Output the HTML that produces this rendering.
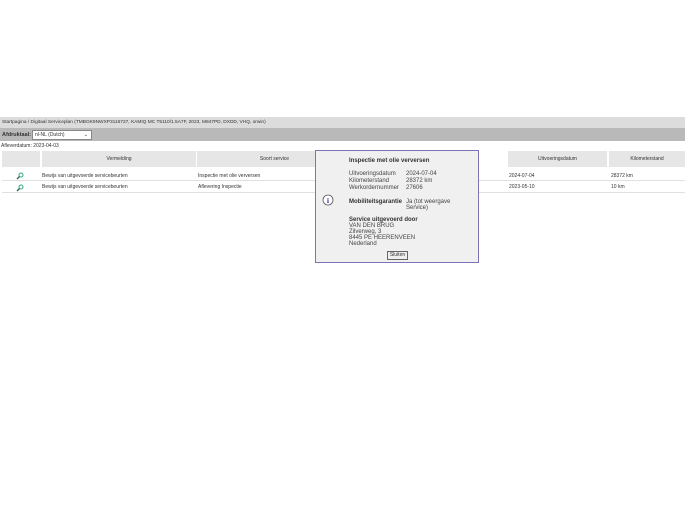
<!DOCTYPE html><html><head><style>
body{margin:0;width:685px;height:514px;background:#fff;font-family:"Liberation Sans",sans-serif;position:relative;overflow:hidden}
.a{position:absolute}
.t{font-size:5px;color:#333}
</style></head><body>
<div class="a" style="left:0;top:117px;width:685px;height:11px;background:#dcdcdc"></div>
<div class="a t" style="left:2px;top:120px;font-size:4.8px">Startpagina / Digitaal Serviceplan (TMBGK9NWXP3116727, KAMIQ MC T5110/1.5A7F, 2023, M847PD, DXDD, VHQ, orwin)</div>
<div class="a" style="left:0;top:128px;width:685px;height:13px;background:#b9b9b9"></div>
<div class="a" style="left:2px;top:132px;font-size:5.5px;font-weight:bold;color:#333">Afdruktaal:</div>
<div class="a" style="left:32px;top:130px;width:56px;height:8px;background:#fff;border:1px solid #888;font-size:5px;color:#333;line-height:8px;padding-left:2px;box-sizing:content-box">nl-NL (Dutch) <span style="float:right;margin-right:3px">⌄</span></div>
<div class="a t" style="left:1px;top:143px">Afleverdatum: 2023-04-03</div>
<div class="a" style="left:2px;top:151px;width:38px;height:16px;background:#e6e6e6"></div>
<div class="a t" style="left:42px;top:151px;width:154px;height:16px;background:#e6e6e6;text-align:center;line-height:17px">Vermelding</div>
<div class="a t" style="left:197px;top:151px;width:155px;height:16px;background:#e6e6e6;text-align:center;line-height:17px">Soort service</div>
<div class="a t" style="left:508px;top:151px;width:99px;height:16px;background:#e6e6e6;text-align:center;line-height:17px">Uitvoeringsdatum</div>
<div class="a t" style="left:609px;top:151px;width:76px;height:16px;background:#e6e6e6;text-align:center;line-height:17px">Kilometerstand</div>
<div class="a" style="left:2px;top:180px;width:683px;height:1px;background:#e0e0e0"></div>
<div class="a" style="left:2px;top:192px;width:683px;height:1px;background:#e0e0e0"></div>
<svg class="a" style="left:16px;top:172px" width="8" height="8"><circle cx="5" cy="3" r="2" fill="none" stroke="#3a8" stroke-width="1"/><line x1="3.5" y1="4.5" x2="1" y2="7" stroke="#264" stroke-width="1.3"/></svg>
<svg class="a" style="left:16px;top:184px" width="8" height="8"><circle cx="5" cy="3" r="2" fill="none" stroke="#3a8" stroke-width="1"/><line x1="3.5" y1="4.5" x2="1" y2="7" stroke="#264" stroke-width="1.3"/></svg>
<div class="a t" style="left:42px;top:173px">Bewijs van uitgevoerde servicebeurten</div>
<div class="a t" style="left:198px;top:173px">Inspectie met olie verversen</div>
<div class="a t" style="left:509px;top:173px">2024-07-04</div>
<div class="a t" style="left:611px;top:173px">28372 km</div>
<div class="a t" style="left:42px;top:184px">Bewijs van uitgevoerde servicebeurten</div>
<div class="a t" style="left:198px;top:184px">Aflevering Inspectie</div>
<div class="a t" style="left:509px;top:184px">2023-05-10</div>
<div class="a t" style="left:611px;top:184px">10 km</div>
<div class="a" style="left:315px;top:150px;width:162px;height:111px;background:#f0f0f0;border:1px solid #7c72b4"></div>
<div class="a" style="left:349px;top:158px;font-size:6px;font-weight:bold;color:#333">Inspectie met olie verversen</div>
<div class="a" style="left:349px;top:171px;font-size:6px;color:#444;line-height:7px">Uitvoeringsdatum<br>Kilometerstand<br>Werkordernummer</div>
<div class="a" style="left:406px;top:171px;font-size:6px;color:#444;line-height:7px">2024-07-04<br>28372 km<br>27606</div>
<svg class="a" style="left:321px;top:194px" width="14" height="14"><circle cx="7" cy="6" r="5" fill="#fff" stroke="#555" stroke-width="0.8"/><text x="7" y="9" font-size="7" font-weight="bold" fill="#22a" text-anchor="middle" font-family="Liberation Serif">i</text></svg>
<div class="a" style="left:349px;top:199px;font-size:6px;font-weight:bold;color:#333">Mobiliteitsgarantie</div>
<div class="a" style="left:406px;top:199px;font-size:6px;color:#444;line-height:6px">Ja (tot weergave<br>Service)</div>
<div class="a" style="left:349px;top:217px;font-size:6px;font-weight:bold;color:#333">Service uitgevoerd door</div>
<div class="a" style="left:349px;top:223px;font-size:6px;color:#444;line-height:6px">VAN DEN BRUG<br>Zilverweg, 3<br>8445 PE HEERENVEEN<br>Nederland</div>
<div class="a" style="left:387px;top:251px;width:19px;height:7px;border:1px solid #666;background:#eee;font-size:5px;text-align:center;line-height:7px;color:#333">Sluiten</div>
</body></html>
